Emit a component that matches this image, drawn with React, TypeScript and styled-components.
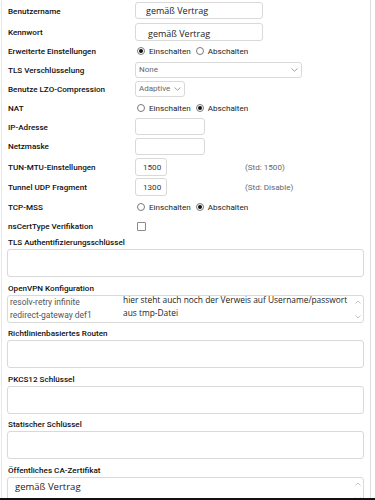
import React from "react";
import styled, { createGlobalStyle } from "styled-components";

const Global = createGlobalStyle`
  html, body { margin: 0; padding: 0; background: #fff; }
  body { font-family: "Liberation Sans Narrow", "Arial Narrow", Roboto, sans-serif; }
  * { box-sizing: border-box; }
`;

const UI_FONT = `"Liberation Sans Narrow", "Arial Narrow", Roboto, sans-serif`;
const TYPED_FONT = `"Open Sans", "Noto Sans", sans-serif`;

const Page = styled.div`
  width: 375px;
  height: 500px;
  display: flex;
  flex-direction: column;
  overflow: hidden;
  background: #fff;
`;

const Panel = styled.div`
  flex: 1;
  min-height: 0;
  overflow: hidden;
  margin-left: 1px;
  width: 370px;
  border-left: 1px solid #e8e8e8;
  border-right: 1px solid #dcdcdc;
  padding-left: 5px;
  display: flex;
  flex-direction: column;
`;

const BottomBar = styled.div`
  height: 2px;
  flex-shrink: 0;
  background: #111;
`;

const Row = styled.div<{ $h: number }>`
  height: ${(p) => p.$h}px;
  display: flex;
  align-items: center;
  flex-shrink: 0;
`;

const Label = styled.div`
  width: 128px;
  flex-shrink: 0;
  padding-left: 1px;
  font-family: ${UI_FONT};
  font-size: 8.1px;
  font-weight: 500;
  color: #111;
  white-space: nowrap;
`;

const Field = styled.div<{ $w: number; $h: number; $pl?: number; $pt?: number }>`
  width: ${(p) => p.$w}px;
  height: ${(p) => p.$h}px;
  border: 1px solid #d9d9d9;
  border-radius: 3px;
  background: #fff;
  display: flex;
  align-items: center;
  padding-left: ${(p) => p.$pl ?? 4}px;
  padding-top: ${(p) => p.$pt ?? 0}px;
  white-space: nowrap;
`;

const TypedText = styled.span<{ $size?: number }>`
  font-family: ${TYPED_FONT};
  font-size: ${(p) => p.$size ?? 9}px;
  color: #222;
`;

const UiText = styled.span<{ $color?: string }>`
  font-family: ${UI_FONT};
  font-size: 8.1px;
  color: ${(p) => p.$color ?? "#333"};
`;

const Select = styled.div<{ $w: number }>`
  width: ${(p) => p.$w}px;
  height: 16px;
  border: 1px solid #d9d9d9;
  border-radius: 3px;
  display: flex;
  align-items: center;
  justify-content: space-between;
  gap: 2px;
  padding: 0 3px 0 3px;
  font-family: ${UI_FONT};
  font-size: 8px;
  color: #666;
  white-space: nowrap;
`;

const Chevron = () => (
  <svg width="7" height="4" viewBox="0 0 7 4">
    <path d="M0.5 0.5 L3.5 3.2 L6.5 0.5" fill="none" stroke="#8a8a8a" strokeWidth="0.8" />
  </svg>
);

const RadioGroup = styled.div`
  display: flex;
  align-items: center;
  padding-left: 2px;
`;

const RadioItem = styled.div`
  display: flex;
  align-items: center;
  gap: 4px;
  margin-right: 5px;
`;

const RadioCircle = styled.span<{ $on?: boolean }>`
  width: 8px;
  height: 8px;
  border-radius: 50%;
  border: 1px solid #7a7a7a;
  background: #fff;
  display: flex;
  align-items: center;
  justify-content: center;
  &::after {
    content: "";
    display: ${(p) => (p.$on ? "block" : "none")};
    width: 4px;
    height: 4px;
    border-radius: 50%;
    background: #111;
  }
`;

const Checkbox = styled.span`
  width: 9px;
  height: 9px;
  margin-left: 2px;
  border: 1px solid #8a8a8a;
  border-radius: 1px;
  background: #fff;
`;

const Hint = styled.span`
  margin-left: 78px;
  font-family: ${UI_FONT};
  font-size: 8.1px;
  color: #666;
`;

const Section = styled.div<{ $first?: boolean }>`
  padding-top: ${(p) => (p.$first ? 0 : 3.6)}px;
  flex-shrink: 0;
  display: flex;
  flex-direction: column;
`;

const SectionLabel = styled.div`
  height: 14px;
  display: flex;
  align-items: center;
  padding-left: 1px;
  font-family: ${UI_FONT};
  font-size: 8.1px;
  font-weight: 500;
  color: #111;
`;

const Area = styled.div`
  width: 357px;
  height: 28px;
  border: 1px solid #d9d9d9;
  border-radius: 3px;
  background: #fff;
  display: flex;
  overflow: hidden;
`;

const AreaBody = styled.div`
  flex: 1;
  display: flex;
  min-width: 0;
`;

const ConfigLines = styled.div`
  width: 115px;
  flex-shrink: 0;
  padding-left: 2px;
  font-family: ${UI_FONT};
  font-size: 8.5px;
  line-height: 13px;
  color: #555;
  white-space: nowrap;
`;

const Annotation = styled.div`
  margin-top: -3px;
  font-family: ${TYPED_FONT};
  font-size: 8.4px;
  line-height: 13px;
  color: #222;
  white-space: nowrap;
`;

const CaText = styled.div`
  padding: 2px 0 0 7px;
  font-family: ${TYPED_FONT};
  font-size: 9.5px;
  color: #222;
  white-space: nowrap;
`;

const ScrollCol = styled.div`
  width: 10px;
  flex-shrink: 0;
  display: flex;
  flex-direction: column;
  justify-content: space-between;
  align-items: center;
  padding: 4px 0 3px;
`;

const ArrowUp = () => (
  <svg width="6" height="4" viewBox="0 0 6 4">
    <path d="M0.5 3.5 L3 1 L5.5 3.5" fill="none" stroke="#b5b5b5" strokeWidth="0.8" />
  </svg>
);
const ArrowDown = () => (
  <svg width="6" height="4" viewBox="0 0 6 4">
    <path d="M0.5 0.5 L3 3 L5.5 0.5" fill="none" stroke="#b5b5b5" strokeWidth="0.8" />
  </svg>
);

const Radios = ({ on }: { on: 0 | 1 }) => (
  <RadioGroup>
    <RadioItem>
      <RadioCircle $on={on === 0} />
      <UiText $color="#222">Einschalten</UiText>
    </RadioItem>
    <RadioItem>
      <RadioCircle $on={on === 1} />
      <UiText $color="#222">Abschalten</UiText>
    </RadioItem>
  </RadioGroup>
);

export default function App() {
  return (
    <Page>
      <Global />
      <Panel>
        <Row $h={21}>
          <Label>Benutzername</Label>
          <Field $w={128} $h={17} $pl={10}>
            <TypedText>gemäß Vertrag</TypedText>
          </Field>
        </Row>
        <Row $h={21}>
          <Label>Kennwort</Label>
          <Field $w={128} $h={18} $pl={12} $pt={3}>
            <TypedText>gemäß Vertrag</TypedText>
          </Field>
        </Row>
        <Row $h={18}>
          <Label>Erweiterte Einstellungen</Label>
          <Radios on={0} />
        </Row>
        <Row $h={19}>
          <Label>TLS Verschlüsselung</Label>
          <Select $w={167}>
            <span>None</span>
            <Chevron />
          </Select>
        </Row>
        <Row $h={19}>
          <Label>Benutze LZO-Compression</Label>
          <Select $w={50}>
            <span>Adaptive</span>
            <Chevron />
          </Select>
        </Row>
        <Row $h={19}>
          <Label>NAT</Label>
          <Radios on={1} />
        </Row>
        <Row $h={19}>
          <Label>IP-Adresse</Label>
          <Field $w={70} $h={17} />
        </Row>
        <Row $h={20}>
          <Label>Netzmaske</Label>
          <Field $w={70} $h={17} />
        </Row>
        <Row $h={21}>
          <Label>TUN-MTU-Einstellungen</Label>
          <Field $w={32} $h={18} $pl={7}>
            <UiText>1500</UiText>
          </Field>
          <Hint>(Std: 1500)</Hint>
        </Row>
        <Row $h={20}>
          <Label>Tunnel UDP Fragment</Label>
          <Field $w={32} $h={18} $pl={7}>
            <UiText>1300</UiText>
          </Field>
          <Hint>(Std: Disable)</Hint>
        </Row>
        <Row $h={20}>
          <Label>TCP-MSS</Label>
          <Radios on={1} />
        </Row>
        <Row $h={18}>
          <Label>nsCertType Verifikation</Label>
          <Checkbox />
        </Row>

        <Section $first>
          <SectionLabel>TLS Authentifizierungsschlüssel</SectionLabel>
          <Area />
        </Section>

        <Section>
          <SectionLabel>OpenVPN Konfiguration</SectionLabel>
          <Area>
            <AreaBody>
              <ConfigLines>
                resolv-retry infinite
                <br />
                redirect-gateway def1
              </ConfigLines>
              <Annotation>
                hier steht auch noch der Verweis auf Username/passwort
                <br />
                aus tmp-Datei
              </Annotation>
            </AreaBody>
            <ScrollCol>
              <ArrowUp />
              <ArrowDown />
            </ScrollCol>
          </Area>
        </Section>

        <Section>
          <SectionLabel>Richtlinienbasiertes Routen</SectionLabel>
          <Area />
        </Section>

        <Section>
          <SectionLabel>PKCS12 Schlüssel</SectionLabel>
          <Area />
        </Section>

        <Section>
          <SectionLabel>Statischer Schlüssel</SectionLabel>
          <Area />
        </Section>

        <Section>
          <SectionLabel>Öffentliches CA-Zertifikat</SectionLabel>
          <Area>
            <AreaBody>
              <CaText>gemäß Vertrag</CaText>
            </AreaBody>
            <ScrollCol>
              <ArrowUp />
              <ArrowDown />
            </ScrollCol>
          </Area>
        </Section>
      </Panel>
      <BottomBar />
    </Page>
  );
}
